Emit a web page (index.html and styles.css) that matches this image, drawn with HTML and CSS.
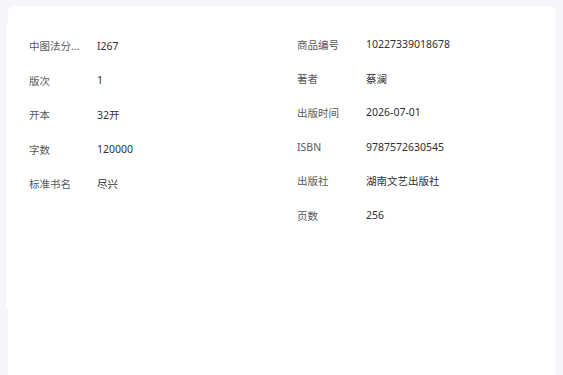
FILE: index.html
```html
<!DOCTYPE html>
<html lang="zh-CN">
<head>
<meta charset="utf-8">
<title>商品详情</title>
<link rel="stylesheet" href="styles.css">
</head>
<body>
<div class="card">
  <div class="grid">
    <ul class="col col-left">
      <li class="row"><span class="label">中图法分类号</span><span class="value">I267</span></li>
      <li class="row"><span class="label">版次</span><span class="value">1</span></li>
      <li class="row"><span class="label">开本</span><span class="value">32开</span></li>
      <li class="row"><span class="label">字数</span><span class="value">120000</span></li>
      <li class="row"><span class="label">标准书名</span><span class="value">尽兴</span></li>
    </ul>
    <ul class="col col-right">
      <li class="row"><span class="label">商品编号</span><span class="value">10227339018678</span></li>
      <li class="row"><span class="label">著者</span><span class="value">蔡澜</span></li>
      <li class="row"><span class="label">出版时间</span><span class="value">2026-07-01</span></li>
      <li class="row"><span class="label">ISBN</span><span class="value">9787572630545</span></li>
      <li class="row"><span class="label">出版社</span><span class="value">湖南文艺出版社</span></li>
      <li class="row"><span class="label">页数</span><span class="value">256</span></li>
    </ul>
  </div>
</div>
</body>
</html>
```
FILE: styles.css
```css
html, body {
  margin: 0;
  padding: 0;
  background: #f5f6fa;
  overflow: hidden;
}

body {
  font-family: "Noto Sans", "Noto Sans CJK SC", sans-serif;
  font-size: 10.5px;
  padding: 6px 8px 0 8px;
  height: 100vh;
  box-sizing: border-box;
}

.card {
  position: relative;
  background: #ffffff;
  border-radius: 6px 6px 0 0;
  height: 100%;
  padding: 22px 21px 0 21px;
  box-sizing: border-box;
}

.card::before {
  content: "";
  position: absolute;
  left: -2px;
  top: 18px;
  width: 2px;
  height: 284px;
  background: #ffffff;
}

.grid {
  display: grid;
  grid-template-columns: 268px 1fr;
}

.col {
  list-style: none;
  margin: 0;
  padding: 0;
  display: flex;
  flex-direction: column;
}

.col-left {
  margin-top: 0.5px;
}

.col-left .row {
  height: 34.5px;
}

.col-right {
  margin-top: -1px;
}

.col-right .row {
  height: 34.2px;
}

.row {
  display: flex;
  align-items: center;
  gap: 16px;
}

.label {
  width: 52px;
  flex: none;
  color: #595959;
  white-space: nowrap;
  overflow: hidden;
  text-overflow: ellipsis;
}

.col-right .label {
  width: 53px;
}

.value {
  color: #303133;
  white-space: nowrap;
}
```
